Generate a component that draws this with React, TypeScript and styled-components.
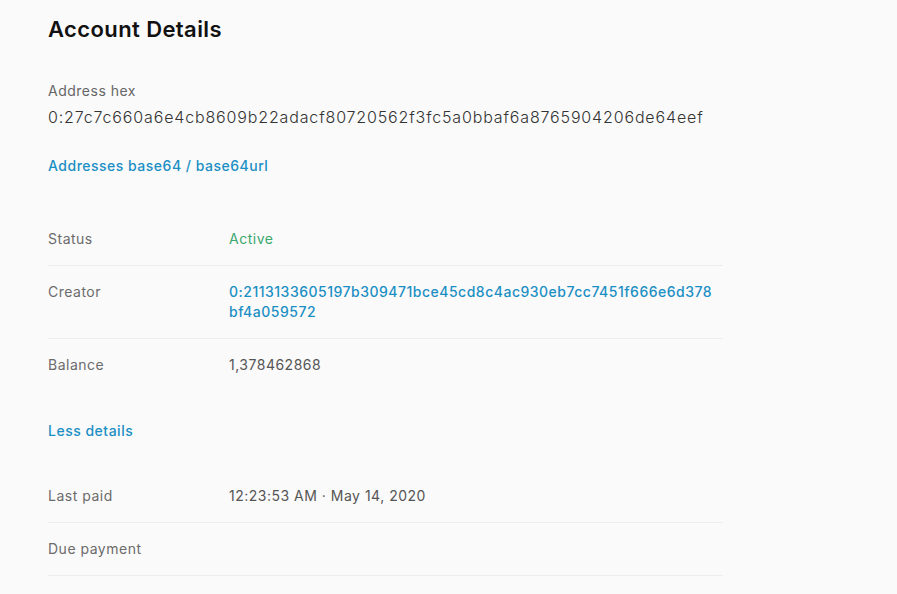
import React from "react";
import styled, { createGlobalStyle } from "styled-components";

const Global = createGlobalStyle`
  html, body { margin: 0; padding: 0; background: #fafafa; }
  body { font-family: Inter, Roboto, "Liberation Sans", sans-serif; -webkit-font-smoothing: antialiased; }
`;

const Page = styled.div`
  padding: 14px 0 0 48px;
  width: 675px;
  color: #333;
`;

const Title = styled.h1`
  margin: 0;
  font-size: 22px;
  line-height: 30px;
  font-weight: 600;
  letter-spacing: 0.4px;
  color: #111;
`;

const Field = styled.div`
  margin-top: 37px;
  display: flex;
  flex-direction: column;
`;

const FieldLabel = styled.div`
  font-size: 14px;
  line-height: 20px;
  letter-spacing: 0.5px;
  color: #666;
`;

const Hex = styled.div`
  font-size: 16px;
  line-height: 26px;
  font-weight: 300;
  letter-spacing: 0.85px;
  color: #333;
  margin-top: 3px;
`;

const Link = styled.a<{ $mt: number }>`
  display: block;
  margin-top: ${(p) => p.$mt}px;
  font-size: 14px;
  line-height: 20px;
  font-weight: 500;
  letter-spacing: 0.5px;
  color: #1a8fc4;
  text-decoration: none;
  cursor: pointer;
`;

const Table = styled.div<{ $mt: number }>`
  margin-top: ${(p) => p.$mt}px;
  display: flex;
  flex-direction: column;
`;

const Row = styled.div<{ $line?: boolean }>`
  display: grid;
  grid-template-columns: 181px 1fr;
  padding: 16px 0;
  border-bottom: 1px solid ${(p) => (p.$line ? "#ededed" : "transparent")};
  font-size: 14px;
  line-height: 20px;
  letter-spacing: 0.5px;
`;

const Label = styled.div`
  color: #6b6b6b;
`;

type Tone = "plain" | "green" | "link";
const Value = styled.div<{ $tone: Tone }>`
  color: ${(p) => (p.$tone === "green" ? "#3aa86f" : p.$tone === "link" ? "#1a8fc4" : "#555")};
  font-weight: ${(p) => (p.$tone === "link" ? 500 : 400)};
  word-break: break-all;
  max-width: 488px;
`;

export default function App() {
  return (
    <>
      <Global />
      <Page>
        <Title>Account Details</Title>
        <Field>
          <FieldLabel>Address hex</FieldLabel>
          <Hex>0:27c7c660a6e4cb8609b22adacf80720562f3fc5a0bbaf6a8765904206de64eef</Hex>
        </Field>
        <Link $mt={26}>Addresses base64 / base64url</Link>
        <Table $mt={37}>
          <Row $line>
            <Label>Status</Label>
            <Value $tone="green">Active</Value>
          </Row>
          <Row $line>
            <Label>Creator</Label>
            <Value $tone="link">0:2113133605197b309471bce45cd8c4ac930eb7cc7451f666e6d378bf4a059572</Value>
          </Row>
          <Row>
            <Label>Balance</Label>
            <Value $tone="plain">1,378462868</Value>
          </Row>
        </Table>
        <Link $mt={29}>Less details</Link>
        <Table $mt={29}>
          <Row $line>
            <Label>Last paid</Label>
            <Value $tone="plain">12:23:53 AM · May 14, 2020</Value>
          </Row>
          <Row $line>
            <Label>Due payment</Label>
            <Value $tone="plain"></Value>
          </Row>
        </Table>
      </Page>
    </>
  );
}
